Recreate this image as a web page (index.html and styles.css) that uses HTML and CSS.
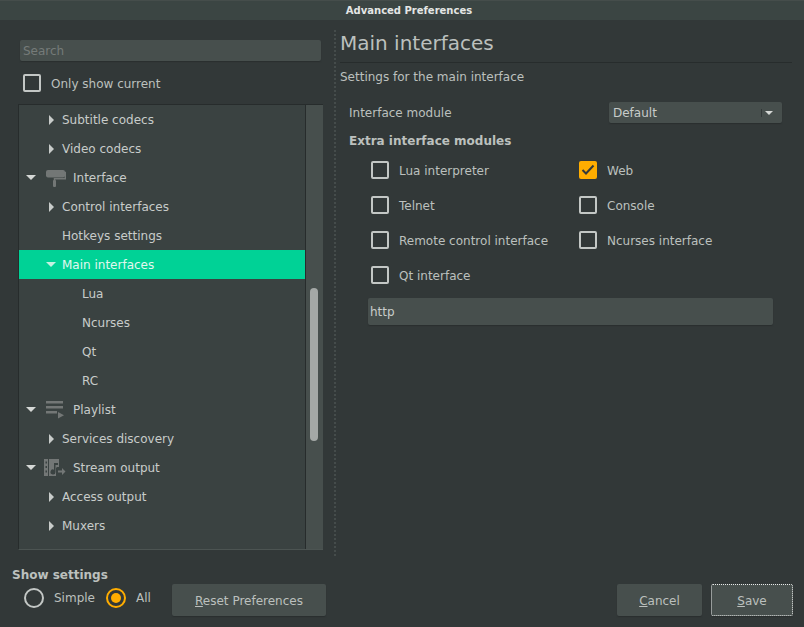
FILE: index.html
```html
<!DOCTYPE html>
<html lang="en">
<head>
  <meta charset="UTF-8" />
  <title>Advanced Preferences</title>
  <link rel="stylesheet" href="styles.css">
</head>
<body>
  <div class="window">
    <div class="titlebar">Advanced Preferences</div>

    <div class="content">
      <div class="pane-left">
        <input class="field search" type="text" placeholder="Search" />
        <label class="check only-current"><span class="box"></span>Only show current</label>

        <div class="tree">
          <div class="tree-list">
            <div class="row lvl1"><span class="arrow closed"></span>Subtitle codecs</div>
            <div class="row lvl1"><span class="arrow closed"></span>Video codecs</div>
            <div class="row lvl0">
              <span class="arrow open"></span>
              <svg class="cat-icon" width="22" height="20" viewBox="0 0 22 20">
                <rect x="2" y="2" width="19" height="7.500" rx="2" fill="#737776"/>
                <path d="M20.500 4.500h.8v6.300H10.500v2" fill="none" stroke="#737776" stroke-width="1.500"/>
                <rect x="9" y="12" width="3" height="7" rx="1" fill="#737776"/>
              </svg>
              Interface
            </div>
            <div class="row lvl1"><span class="arrow closed"></span>Control interfaces</div>
            <div class="row lvl1"><span class="arrow none"></span>Hotkeys settings</div>
            <div class="row lvl1 selected"><span class="arrow open small"></span>Main interfaces</div>
            <div class="row lvl2">Lua</div>
            <div class="row lvl2">Ncurses</div>
            <div class="row lvl2">Qt</div>
            <div class="row lvl2">RC</div>
            <div class="row lvl0">
              <span class="arrow open"></span>
              <svg class="cat-icon" width="22" height="20" viewBox="0 0 22 20">
                <path d="M2 1h17v2.500H2zM2 6h17v2.500H2zM2 11h11v2.500H2z" fill="#737776"/>
                <path d="M14 12l6 3.200-6 3.200z" fill="#737776"/>
              </svg>
              Playlist
            </div>
            <div class="row lvl1"><span class="arrow closed"></span>Services discovery</div>
            <div class="row lvl0">
              <span class="arrow open"></span>
              <svg class="cat-icon" width="22" height="20" viewBox="0 0 22 20">
                <path fill-rule="evenodd" d="M0 1h4v17H0zM1.500 3.500v2h1.500v-2zM1.500 8v2h1.500V8zM1.500 12.500v2h1.500v-2z" fill="#737776"/>
                <path fill-rule="evenodd" d="M5 1h10v8h-2l-1 1v8H5zM10 5h4v2h-2.500v7a2.500 2.500 0 1 1-1.500-2.300z" fill="#737776"/>
                <path d="M14 12.500h4V10l3.500 3.500L18 17v-2.500h-4z" fill="#737776"/>
              </svg>
              Stream output
            </div>
            <div class="row lvl1"><span class="arrow closed"></span>Access output</div>
            <div class="row lvl1"><span class="arrow closed"></span>Muxers</div>
          </div>
          <div class="scrollbar"><div class="thumb"></div></div>
        </div>
      </div>

      <div class="splitter"></div>

      <div class="pane-right">
        <h2 class="page-title">Main interfaces</h2>
        <p class="page-desc">Settings for the main interface</p>

        <div class="module-row">
          <span>Interface module</span>
          <div class="combo">Default<span class="combo-arrow"></span></div>
        </div>
        <div class="group-title">Extra interface modules</div>

        <div class="modules">
          <label class="check"><span class="box"></span>Lua interpreter</label>
          <label class="check">
            <span class="box on">
              <svg width="18" height="18" viewBox="0 0 18 18"><path d="M3.500 9l3.500 3.500L14.500 4.500" fill="none" stroke="#33393a" stroke-width="2"/></svg>
            </span>Web
          </label>
          <label class="check"><span class="box"></span>Telnet</label>
          <label class="check"><span class="box"></span>Console</label>
          <label class="check"><span class="box"></span>Remote control interface</label>
          <label class="check"><span class="box"></span>Ncurses interface</label>
          <label class="check"><span class="box"></span>Qt interface</label>
        </div>

        <input class="field modules-value" type="text" value="http" />
      </div>
    </div>

    <div class="footer">
      <div class="show-settings">
        <div class="show-title">Show settings</div>
        <div class="radios">
          <span class="radio"></span><span class="radio-label">Simple</span>
          <span class="radio on"></span><span class="radio-label">All</span>
        </div>
      </div>
      <button class="btn reset"><u>R</u>eset Preferences</button>
      <div class="spacer"></div>
      <button class="btn cancel"><u>C</u>ancel</button>
      <button class="btn save"><u>S</u>ave</button>
    </div>
  </div>
</body>
</html>
```

FILE: styles.css
```css
* {
  box-sizing: border-box;
}

html, body {
  margin: 0;
  height: 100%;
  overflow: hidden;
}

body {
  font-family: "DejaVu Sans", sans-serif;
  font-size: 12px;
  color: #bcc0be;
  background-color: #323838;
}

.window {
  width: 804px;
  height: 627px;
  display: flex;
  flex-direction: column;
}

.titlebar {
  height: 20px;
  padding-left: 14px;
  line-height: 19px;
  text-align: center;
  font-size: 10px;
  font-weight: bold;
  color: #e4e6e5;
  background-color: #3b4543;
  border-top: 1px solid #454d4b;
}

.content {
  display: flex;
  height: 536px;
}

/* left side */
.pane-left {
  width: 334px;
  padding: 20px 0 0 18px;
}

.field {
  display: block;
  border: none;
  border-radius: 2px;
  background-color: #474f4d;
  color: #c8ccca;
  font-family: inherit;
  font-size: 12px;
  outline: none;
  box-shadow: 0 1px 1px #2a2f2f;
}

.field::placeholder {
  color: #757b79;
}

.search {
  width: 301px;
  height: 21px;
  margin-left: 2px;
  padding: 0 3px;
}

.check {
  display: flex;
  align-items: center;
  gap: 10px;
  height: 18px;
  padding-top: 1px;
}

.box {
  width: 18px;
  height: 18px;
  flex: none;
  margin-top: -1px;
  border: 2px solid #c3c7c5;
  border-radius: 2px;
}

.box.on {
  border: none;
  background-color: #ffad00;
}

.box svg {
  display: block;
}

.only-current {
  margin: 13px 0 12px 5px;
}

.tree {
  display: flex;
  width: 305px;
  height: 446px;
  color: #c8ccca;
  background-color: #3a4241;
  border-top: 1px solid #272c2c;
  border-left: 1px solid #272c2c;
  border-bottom: 1px solid #4c5452;
}

.tree-list {
  flex: 1;
  overflow: hidden;
  border-right: 1px solid #272c2c;
}

.row {
  display: flex;
  align-items: center;
  height: 29px;
  flex: none;
}

.row.lvl0 {
  padding-left: 7px;
}

.row.lvl1 {
  padding-left: 30px;
}

.row.lvl2 {
  padding-left: 63px;
}

.row.selected {
  background-color: #00d296;
  color: #e2f7ef;
  padding-left: 27px;
}

.arrow {
  flex: none;
  width: 0;
  height: 0;
}

.arrow.closed {
  margin-right: 8px;
  border-top: 5px solid transparent;
  border-bottom: 5px solid transparent;
  border-left: 5px solid #c8ccca;
}

.arrow.none {
  width: 13px;
}

.arrow.open {
  margin-right: 10px;
  border-left: 5px solid transparent;
  border-right: 5px solid transparent;
  border-top: 5px solid #d5d8d6;
}

.arrow.open.small {
  margin-right: 6px;
  border-top-color: #c4f1e1;
}

.cat-icon {
  flex: none;
  margin-left: -2px;
  margin-right: 7px;
}

.scrollbar {
  width: 17px;
  flex: none;
  padding: 183px 4px 0 4px;
  background-color: #474f4d;
}

.thumb {
  width: 8px;
  height: 153px;
  border-radius: 4px;
  background-color: #a4a8a6;
}

.splitter {
  width: 4px;
  height: 526px;
  margin-top: 10px;
  border-left: 2px dotted #454c4b;
}

/* right side */
.pane-right {
  flex: 1;
  padding: 11px 12px 0 2px;
}

.page-title {
  margin: 0;
  height: 32px;
  font-size: 20px;
  font-weight: normal;
  line-height: 24px;
  border-bottom: 1px solid #272c2c;
}

.page-desc {
  margin: 7px 0 0 0;
  line-height: 15px;
}

.module-row {
  display: flex;
  justify-content: space-between;
  align-items: center;
  margin: 17px 10px 0 9px;
  height: 21px;
}

.combo {
  position: relative;
  width: 173px;
  height: 21px;
  padding-left: 4px;
  line-height: 22px;
  color: #c8ccca;
  border-radius: 2px;
  background-color: #474f4d;
  box-shadow: 0 1px 1px #2a2f2f;
}

.combo-arrow {
  position: absolute;
  top: 9px;
  right: 9px;
  width: 0;
  height: 0;
  border-left: 4px solid transparent;
  border-right: 4px solid transparent;
  border-top: 4px solid #d5d8d6;
}

.combo-arrow::before {
  content: "";
  position: absolute;
  top: -6px;
  left: -8px;
  width: 1px;
  height: 8px;
  background-color: #323838;
}

.group-title {
  margin: 11px 0 0 9px;
  font-weight: bold;
  line-height: 15px;
}

.modules {
  display: grid;
  grid-template-columns: 208px 1fr;
  row-gap: 17px;
  margin: 12px 0 0 31px;
}

.modules-value {
  width: 405px;
  height: 27px;
  margin: 14px 0 0 28px;
  padding: 0 2px;
}

/* bottom bar */
.footer {
  display: flex;
  align-items: flex-start;
  padding: 0 11px 0 12px;
  flex: 1;
}

.show-settings {
  width: 160px;
  flex: none;
  padding-top: 12px;
}

.show-title {
  font-weight: bold;
  line-height: 15px;
}

.radios {
  display: flex;
  align-items: center;
  margin: 5px 0 0 12px;
}

.radio {
  position: relative;
  flex: none;
  width: 20px;
  height: 20px;
  border: 2px solid #c3c7c5;
  border-radius: 50%;
}

.radio.on {
  border-color: #ffad00;
}

.radio.on::after {
  content: "";
  position: absolute;
  top: 3px;
  left: 3px;
  width: 10px;
  height: 10px;
  border-radius: 50%;
  background-color: #ffad00;
}

.radio-label {
  flex: none;
  margin-left: 10px;
  width: 52px;
}

.btn {
  height: 32px;
  margin-top: 28px;
  padding: 2px 0 0 0;
  border: none;
  border-radius: 2px;
  font-family: inherit;
  font-size: 12px;
  color: #bcc0be;
  background-color: #474f4d;
  box-shadow: 0 1px 1px #2a2f2f;
}

.reset {
  width: 154px;
}

.spacer {
  flex: 1;
}

.cancel {
  width: 85px;
  margin-right: 9px;
}

.save {
  width: 82px;
  outline: 1px dotted #e8eae9;
  outline-offset: -1px;
}
```
